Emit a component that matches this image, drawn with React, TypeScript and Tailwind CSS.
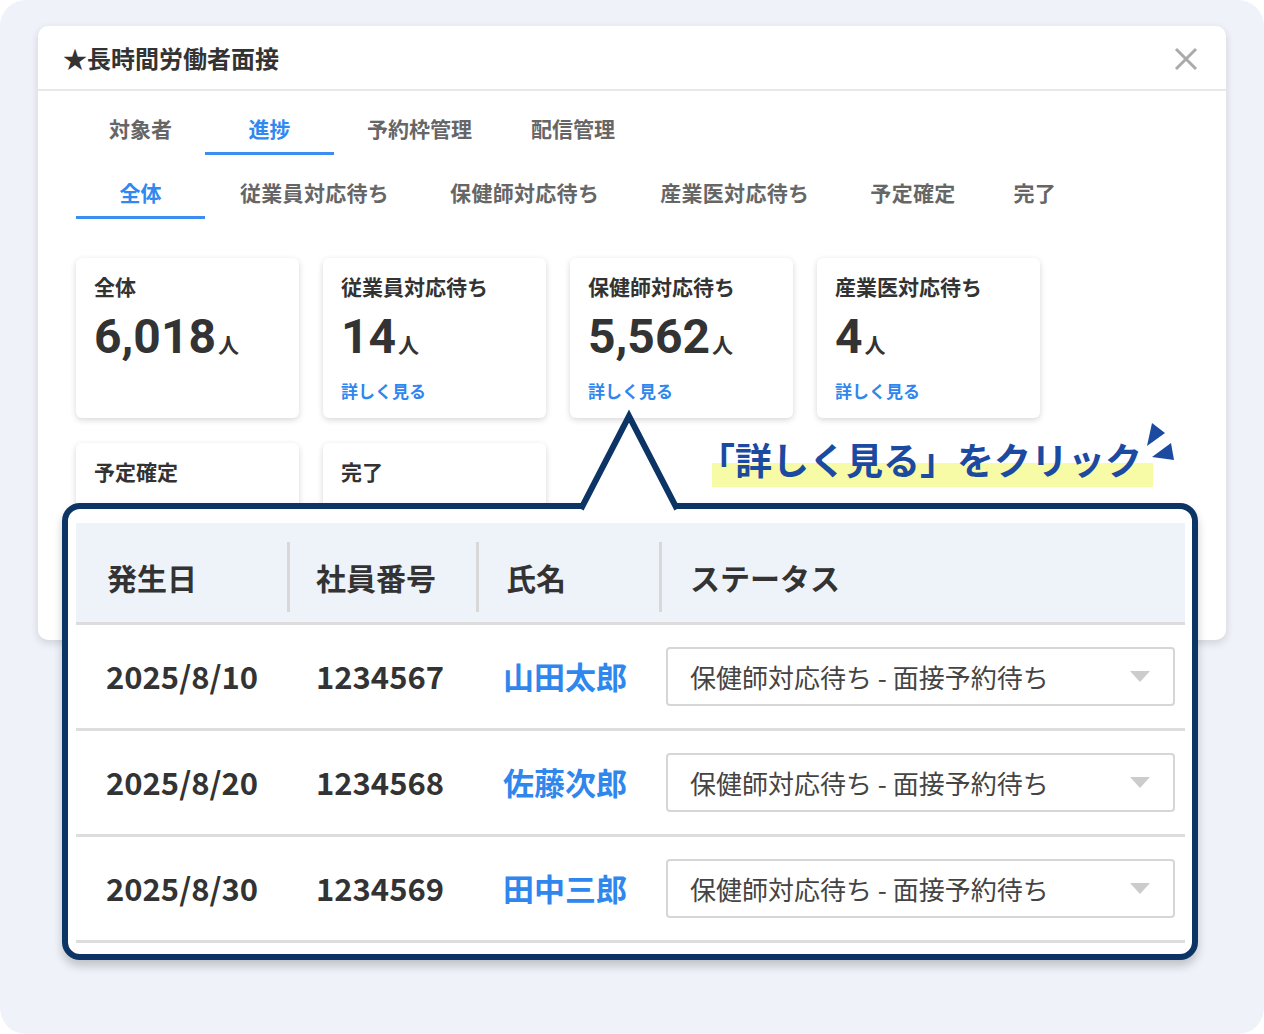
import React from "react";

const jp = "font-['Noto_Sans_CJK_JP','Noto_Sans',sans-serif]";

function Card({ title, value, link }: { title: string; value?: string; link?: boolean }) {
  return (
    <div className="h-[160px] rounded-[6px] bg-white shadow-[0_2px_6px_rgba(0,0,0,0.16)] pt-[14px] px-[18px] flex flex-col">
      <div className="text-[21px] leading-[28px] font-bold text-[#333]">{title}</div>
      {value && (
        <div className="mt-[10px] h-[54px] flex items-baseline text-[#333]">
          <span className="font-['Roboto',sans-serif] font-bold text-[48px] leading-[54px]">{value}</span>
          <span className="ml-[2px] text-[21px] font-bold">人</span>
        </div>
      )}
      {link && <div className="mt-[15px] text-[17px] leading-[24px] font-bold text-[#2f87ee]">詳しく見る</div>}
    </div>
  );
}

function Row({ date, num, name }: { date: string; num: string; name: string }) {
  return (
    <div className="grid grid-cols-[211px_189px_183px_1fr] h-[106px] border-b-[3px] border-[#dddddd] items-center">
      <div className="pl-[30px] text-[31px] font-bold text-[#333]">{date}</div>
      <div className="pl-[29px] text-[31px] font-bold text-[#333]">{num}</div>
      <div className="pl-[27px] text-[31px] font-bold text-[#2f87ee]">{name}</div>
      <div className="pl-[7px] pr-[10px]">
        <div className="h-[59px] border-2 border-[#d6d6d6] rounded-[4px] flex items-center justify-between pl-[22px] pr-[23px]">
          <span className="text-[26px] text-[#444]">保健師対応待ち - 面接予約待ち</span>
          <svg width="20" height="11" viewBox="0 0 20 11">
            <polygon points="0,0 20,0 10,11" fill="#cccccc" />
          </svg>
        </div>
      </div>
    </div>
  );
}

export default function App() {
  return (
    <div className={`w-[1264px] h-[1034px] bg-white ${jp}`}>
      <div className="relative h-[1034px] rounded-[26px] bg-[#eff3f9] pt-[26px] pl-[38px]">
        {/* main card */}
        <div className="w-[1188px] h-[614px] bg-white rounded-[10px] shadow-[0_3px_8px_rgba(0,0,0,0.14)]">
          <div className="h-[65px] flex items-center justify-between pl-[25px] pr-[28px] border-b-2 border-[#e8e8e8]">
            <div className="text-[24px] font-bold text-[#333]">★長時間労働者面接</div>
            <svg width="24" height="24" viewBox="0 0 24 24" className="mt-[3px]">
              <path d="M2 2 L22 22 M22 2 L2 22" stroke="#aaaaaa" strokeWidth="3" />
            </svg>
          </div>
          <div className="px-[38px]">
            <div className="flex items-end h-[64px] text-[21px] font-bold text-[#666]">
              <div className="w-[129px] flex justify-center pb-[8px] border-b-[3px] border-transparent">対象者</div>
              <div className="w-[129px] flex justify-center pb-[8px] border-b-[3px] border-[#3b8ef0] text-[#3088f0]">進捗</div>
              <div className="ml-[33px] flex gap-[59px] pb-[11px]">
                <span>予約枠管理</span>
                <span>配信管理</span>
              </div>
            </div>
            <div className="flex items-end h-[64px] text-[21px] font-bold text-[#666]">
              <div className="w-[129px] flex justify-center pb-[8px] border-b-[3px] border-[#3b8ef0] text-[#3088f0]">全体</div>
              <div className="ml-[35px] flex gap-[61px] pb-[11px] tracking-[0.3px]">
                <span>従業員対応待ち</span>
                <span>保健師対応待ち</span>
                <span>産業医対応待ち</span>
                <span>予定確定</span>
                <span className="-ml-[3px]">完了</span>
              </div>
            </div>
            <div className="mt-[39px] grid grid-cols-[repeat(4,223px)] gap-x-[24px] gap-y-[25px]">
              <Card title="全体" value="6,018" />
              <Card title="従業員対応待ち" value="14" link />
              <Card title="保健師対応待ち" value="5,562" link />
              <Card title="産業医対応待ち" value="4" link />
              <Card title="予定確定" />
              <Card title="完了" />
            </div>
          </div>
        </div>

        {/* callout */}
        <div className="absolute left-[712px] top-[463px] w-[441px] h-[24px] bg-[#f7fba6]" />
        <div className="absolute left-[698px] top-[437px] text-[37px] leading-[44px] font-bold text-[#1b4aa0] whitespace-nowrap">
          「詳しく見る」をクリック
        </div>
        <svg className="absolute left-[1140px] top-[418px]" width="40" height="45" viewBox="0 0 40 45">
          <polygon points="12,5 25,15 7,28" fill="#1b4aa0" />
          <polygon points="31,25 34,42 12,39" fill="#1b4aa0" />
        </svg>

        {/* popup */}
        <div className="absolute left-[62px] top-[503px] w-[1136px] border-[6px] border-[#0c3566] rounded-[18px] bg-white pt-[14px] pb-[11px] pl-[8px] pr-[7px] shadow-[0_6px_10px_rgba(0,0,0,0.2)]">
          <svg className="absolute left-[504px] top-[-101px]" width="114" height="104" viewBox="0 0 114 104">
            <polygon points="9,101 57,8 105,101" fill="#ffffff" />
            <polyline points="9,101 57,8 105,101" fill="none" stroke="#0c3566" strokeWidth="6" strokeLinejoin="miter" />
          </svg>
          <div className="grid grid-cols-[211px_189px_183px_1fr] h-[102px] bg-[#eef3fa] border-b-[3px] border-[#dcdcdc] items-center pt-[9px] text-[30px] font-bold text-[#333]">
            <div className="pl-[31px] h-[70px] flex items-center">発生日</div>
            <div className="pl-[26px] h-[70px] flex items-center border-l-[3px] border-[#d8d8d8]">社員番号</div>
            <div className="pl-[27px] h-[70px] flex items-center border-l-[3px] border-[#d8d8d8]">氏名</div>
            <div className="pl-[28px] h-[70px] flex items-center border-l-[3px] border-[#d8d8d8]">ステータス</div>
          </div>
          <Row date="2025/8/10" num="1234567" name="山田太郎" />
          <Row date="2025/8/20" num="1234568" name="佐藤次郎" />
          <Row date="2025/8/30" num="1234569" name="田中三郎" />
        </div>
      </div>
    </div>
  );
}
